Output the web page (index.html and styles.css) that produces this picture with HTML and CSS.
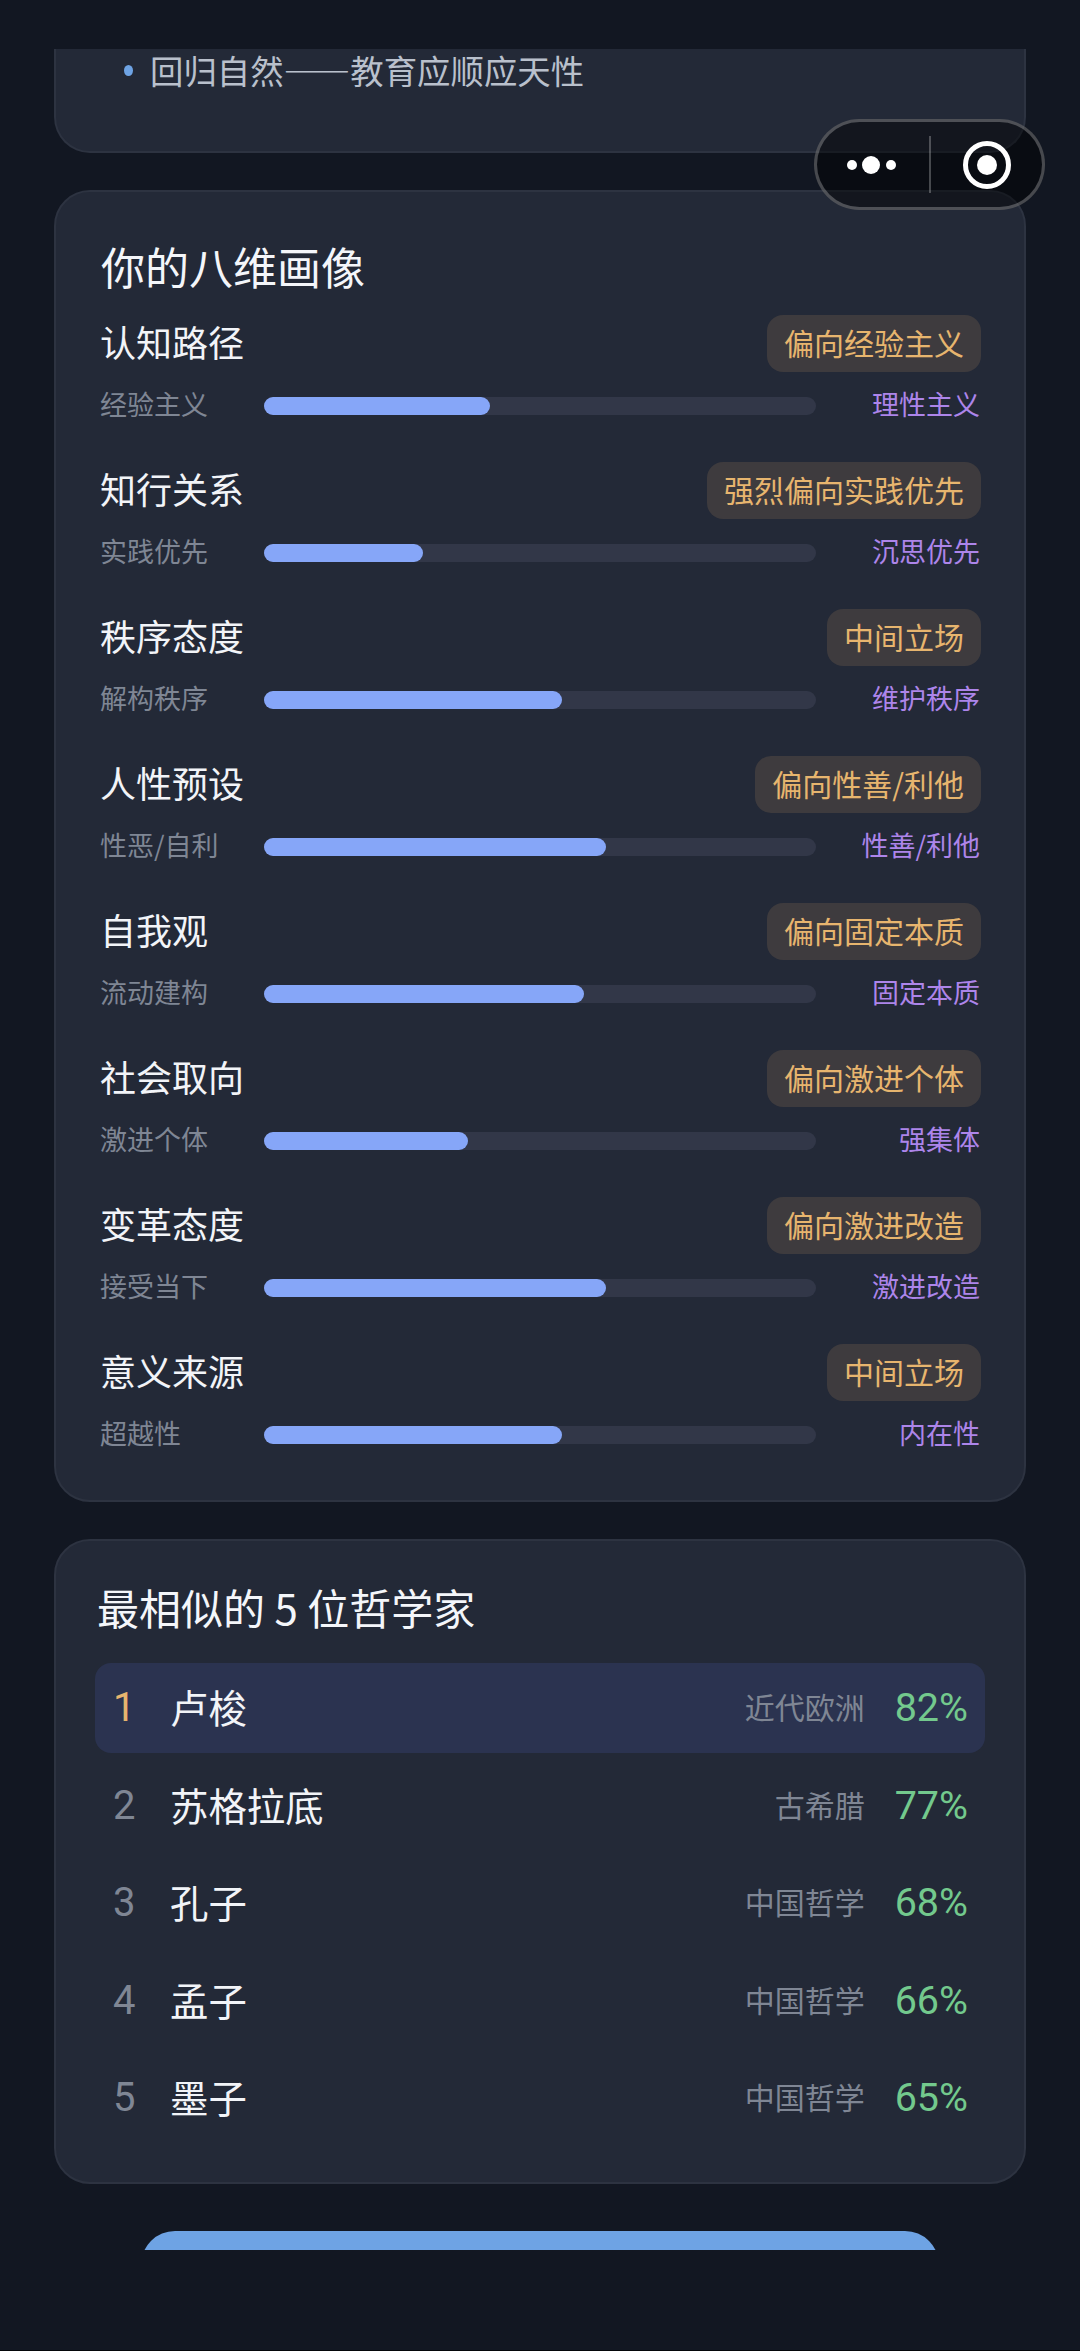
FILE: index.html
```html
<!DOCTYPE html>
<html lang="zh-CN">
  <head>
    <meta charset="UTF-8" />
    <meta name="viewport" content="width=device-width, initial-scale=1" />
    <title>你的八维画像</title>
    <link rel="stylesheet" href="styles.css">
  </head>
  <body>
    <main class="scroll">
      <!-- Tail of the previous card, scrolled off the top -->
      <section class="card card-tail">
        <div class="bullet"><span class="dot"></span>回归自然——教育应顺应天性</div>
      </section>

      <section class="card card-dims">
        <h2 class="dims-title">你的八维画像</h2>
        <div class="dims">
          <div class="dim">
            <div class="dim-head"><span class="dim-name">认知路径</span><span class="pill">偏向经验主义</span></div>
            <div class="dim-bar"><span class="left">经验主义</span><div class="track"><div class="fill" style="width: 41%"></div></div><span class="right">理性主义</span></div>
          </div>
          <div class="dim">
            <div class="dim-head"><span class="dim-name">知行关系</span><span class="pill">强烈偏向实践优先</span></div>
            <div class="dim-bar"><span class="left">实践优先</span><div class="track"><div class="fill" style="width: 28.8%"></div></div><span class="right">沉思优先</span></div>
          </div>
          <div class="dim">
            <div class="dim-head"><span class="dim-name">秩序态度</span><span class="pill">中间立场</span></div>
            <div class="dim-bar"><span class="left">解构秩序</span><div class="track"><div class="fill" style="width: 54%"></div></div><span class="right">维护秩序</span></div>
          </div>
          <div class="dim">
            <div class="dim-head"><span class="dim-name">人性预设</span><span class="pill">偏向性善/利他</span></div>
            <div class="dim-bar"><span class="left">性恶/自利</span><div class="track"><div class="fill" style="width: 62%"></div></div><span class="right">性善/利他</span></div>
          </div>
          <div class="dim">
            <div class="dim-head"><span class="dim-name">自我观</span><span class="pill">偏向固定本质</span></div>
            <div class="dim-bar"><span class="left">流动建构</span><div class="track"><div class="fill" style="width: 58%"></div></div><span class="right">固定本质</span></div>
          </div>
          <div class="dim">
            <div class="dim-head"><span class="dim-name">社会取向</span><span class="pill">偏向激进个体</span></div>
            <div class="dim-bar"><span class="left">激进个体</span><div class="track"><div class="fill" style="width: 37%"></div></div><span class="right">强集体</span></div>
          </div>
          <div class="dim">
            <div class="dim-head"><span class="dim-name">变革态度</span><span class="pill">偏向激进改造</span></div>
            <div class="dim-bar"><span class="left">接受当下</span><div class="track"><div class="fill" style="width: 62%"></div></div><span class="right">激进改造</span></div>
          </div>
          <div class="dim">
            <div class="dim-head"><span class="dim-name">意义来源</span><span class="pill">中间立场</span></div>
            <div class="dim-bar"><span class="left">超越性</span><div class="track"><div class="fill" style="width: 54%"></div></div><span class="right">内在性</span></div>
          </div>
        </div>
      </section>

      <section class="card card-rank">
        <h2 class="rank-title">最相似的 5 位哲学家</h2>
        <div class="rank-row top"><span class="num">1</span><span class="name">卢梭</span><span class="era">近代欧洲</span><span class="pct">82%</span></div>
        <div class="rank-row"><span class="num">2</span><span class="name">苏格拉底</span><span class="era">古希腊</span><span class="pct">77%</span></div>
        <div class="rank-row"><span class="num">3</span><span class="name">孔子</span><span class="era">中国哲学</span><span class="pct">68%</span></div>
        <div class="rank-row"><span class="num">4</span><span class="name">孟子</span><span class="era">中国哲学</span><span class="pct">66%</span></div>
        <div class="rank-row"><span class="num">5</span><span class="name">墨子</span><span class="era">中国哲学</span><span class="pct">65%</span></div>
      </section>

      <div class="cta"></div>
    </main>

    <!-- Mini program capsule -->
    <div class="capsule">
      <svg class="cap-more" width="60" height="24" viewBox="0 0 60 24">
        <circle cx="7" cy="12" r="5" fill="#fff" />
        <circle cx="26" cy="12" r="9" fill="#fff" />
        <circle cx="46" cy="12" r="5" fill="#fff" />
      </svg>
      <span class="cap-line"></span>
      <svg class="cap-close" width="52" height="52" viewBox="0 0 52 52">
        <circle cx="26" cy="26" r="21.5" fill="none" stroke="#fff" stroke-width="5" />
        <circle cx="26" cy="26" r="10" fill="#fff" />
      </svg>
    </div>
  </body>
</html>
```

FILE: styles.css
```css
* {
  box-sizing: border-box;
}

html,
body {
  margin: 0;
  padding: 0;
}

body {
  position: relative;
  width: 1080px;
  height: 2351px;
  overflow: hidden;
  background: #121722;
  border-bottom: 1px solid #05070a;
  font-family: "Noto Sans CJK SC", "Noto Sans", sans-serif;
  color: #f2f4f8;
}

.scroll {
  height: 2250px;
  padding: 49px 54px 0;
  overflow: hidden;
  display: flex;
  flex-direction: column;
}

.card {
  flex: none;
  background: #232937;
  border: 2px solid #2d3341;
  border-radius: 36px;
}

.card-tail {
  height: 104px;
  padding: 1px 0 0 68px;
  border-top: 0;
  border-radius: 0 0 36px 36px;
}

.bullet {
  display: flex;
  align-items: center;
  gap: 17px;
  height: 40px;
  font-size: 33.4px;
  line-height: 40px;
  color: #b9c0cc;
}

.dot {
  width: 9px;
  height: 11px;
  border-radius: 50%;
  background: #6ea3e4;
}

.card-dims {
  margin-top: 37px;
  height: 1312px;
  padding: 42px 43px 0 44px;
}

.dims-title {
  margin: 0 0 16.5px 1px;
  height: 64px;
  font-size: 44px;
  line-height: 64px;
  font-weight: 400;
  color: #f4f6fa;
}

.dims {
  display: flex;
  flex-direction: column;
  gap: 36.14px;
}

.dim-head {
  display: flex;
  justify-content: space-between;
  align-items: center;
  height: 57px;
  margin-bottom: 14px;
}

.dim-name {
  padding-bottom: 5px;
  font-size: 36px;
  color: #f2f4f8;
}

.pill {
  height: 57px;
  padding: 0 17px;
  border-radius: 16px;
  background: #3e3b3e;
  color: #e7b56e;
  font-size: 30px;
  line-height: 55px;
}

.dim-bar {
  display: flex;
  align-items: center;
  height: 40px;
}

.left {
  width: 164px;
  padding-bottom: 5px;
  font-size: 27px;
  color: #7f8694;
}

.right {
  flex: 1;
  padding: 0 1px 5px 0;
  text-align: right;
  font-size: 27px;
  color: #ad85ea;
}

.track {
  width: 552px;
  height: 18px;
  border-radius: 9px;
  background: #323748;
}

.fill {
  height: 100%;
  border-radius: 9px;
  background: #86a6f8;
}

.card-rank {
  margin-top: 37px;
  height: 645px;
  padding: 35px 39px 0 39px;
}

.rank-title {
  margin: 0 0 24.5px 2px;
  height: 62px;
  font-size: 42px;
  line-height: 62px;
  font-weight: 400;
  color: #f4f6fa;
}

.rank-row {
  display: flex;
  align-items: center;
  height: 90px;
  margin-bottom: 7.5px;
  padding: 0 17px 0 18px;
  border-radius: 16px;
}

.rank-row.top {
  background: #2b3350;
}

.num {
  width: 57px;
  font-family: Roboto, sans-serif;
  font-size: 40px;
  color: #7f8694;
}

.top .num {
  color: #e7b56e;
}

.name {
  flex: 1;
  padding-bottom: 3px;
  font-size: 38.4px;
  color: #f2f4f8;
}

.era {
  padding-bottom: 3px;
  font-size: 30px;
  color: #7f8694;
}

.pct {
  margin-left: 30px;
  font-family: Roboto, sans-serif;
  font-size: 39.5px;
  color: #73c98d;
}

.cta {
  flex: none;
  width: 798px;
  height: 90px;
  margin: 47px auto 0;
  border-radius: 34px;
  background: #6ea3e4;
}

.capsule {
  position: absolute;
  top: 119px;
  left: 814px;
  width: 231px;
  height: 91px;
  display: flex;
  align-items: center;
  border: 3px solid rgba(255, 255, 255, 0.25);
  border-radius: 46px;
  background: rgba(0, 0, 0, 0.45);
}

.cap-more {
  margin-left: 28px;
}

.cap-line {
  width: 2px;
  height: 57px;
  margin-left: 24px;
  background: rgba(255, 255, 255, 0.25);
}

.cap-close {
  margin-left: 30px;
}
```
